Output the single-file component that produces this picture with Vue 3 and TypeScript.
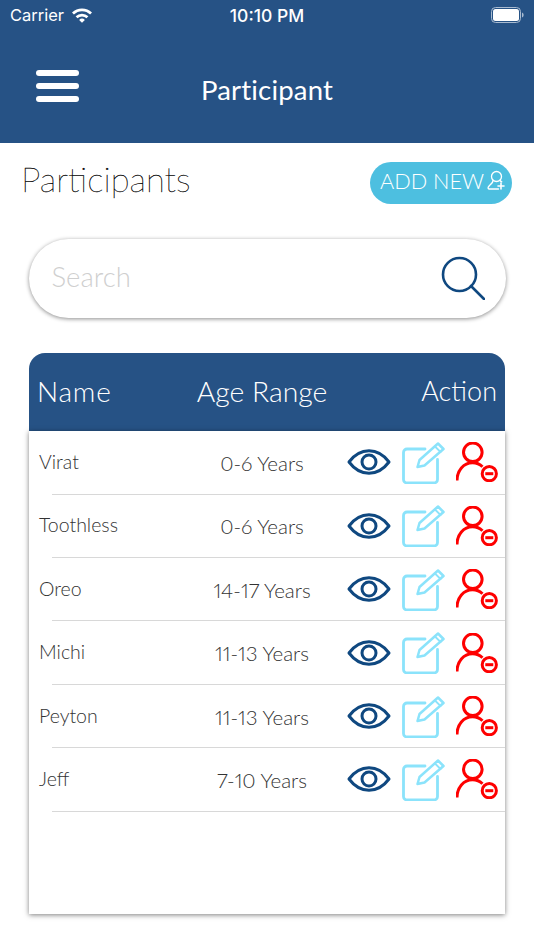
<script setup lang="ts">
interface Participant { name: string; age: string }
const participants: Participant[] = [
  { name: 'Virat', age: '0-6 Years' },
  { name: 'Toothless', age: '0-6 Years' },
  { name: 'Oreo', age: '14-17 Years' },
  { name: 'Michi', age: '11-13 Years' },
  { name: 'Peyton', age: '11-13 Years' },
  { name: 'Jeff', age: '7-10 Years' },
]
</script>

<template>
  <div class="page">
    <header class="top">
      <div class="status">
        <div class="status-left">
          <span>Carrier</span>
          <svg class="wifi" viewBox="0 0 22 16" width="22" height="16">
            <path d="M1 5.600a14.200 14.200 0 0 1 20 0l-1.900 2a11.500 11.500 0 0 0-16.200 0z" fill="#fff" />
            <path d="M4.600 9.300a9.100 9.100 0 0 1 12.800 0l-1.900 2a6.400 6.400 0 0 0-9 0z" fill="#fff" />
            <path d="M8.100 12.900a4.100 4.100 0 0 1 5.800 0L11 15.800z" fill="#fff" />
          </svg>
        </div>
        <div class="status-time">10:10 PM</div>
        <div class="status-right">
          <svg viewBox="0 0 33 16" width="33" height="16">
            <rect x="0.500" y="0.500" width="29" height="15" rx="4" fill="none" stroke="#a9bbd0" />
            <rect x="2" y="2" width="26" height="12" rx="2.500" fill="#fff" />
            <path d="M31 5.500c1.200.4 1.600 1.300 1.600 2.500s-.4 2.100-1.600 2.500z" fill="#a9bbd0" />
          </svg>
        </div>
      </div>
      <nav class="nav">
        <div class="burger"><i></i><i></i><i></i></div>
        <h1 class="nav-title">Participant</h1>
        <div></div>
      </nav>
    </header>

    <section class="heading">
      <h2>Participants</h2>
      <button class="add" type="button">
        <span>ADD NEW</span>
        <svg viewBox="0 0 20 21" width="20" height="21" fill="none" stroke="#fff" stroke-width="1.300" stroke-linecap="round" stroke-linejoin="round">
          <circle cx="10.500" cy="6.500" r="5" />
          <path d="M7 10.500c.2 2-1.700 3.300-3.700 5.200-1.500 1.500-1.700 3-.3 3.300h9.500M14 10.500c.5.700 1 1 1.800 1.300" />
          <path d="M12 16h6M15 13v6" stroke-width="1.600" />
        </svg>
      </button>
    </section>

    <div class="search">
      <span class="placeholder">Search</span>
      <svg viewBox="0 0 44 44" width="44" height="44" fill="none" stroke="#0f4880" stroke-width="2.600" stroke-linecap="round">
        <circle cx="18.500" cy="18.500" r="16.500" />
        <path d="M30 30l13 13" />
      </svg>
    </div>

    <section class="table">
      <div class="thead">
        <span class="th-name">Name</span>
        <span class="th-age">Age Range</span>
        <span class="th-action">Action</span>
      </div>
      <div class="tbody">
        <template v-for="p in participants" :key="p.name">
          <div class="row">
            <span class="name">{{ p.name }}</span>
            <span class="age">{{ p.age }}</span>
            <div class="actions">
              <svg class="eye" viewBox="0 0 44 26" width="44" height="26" fill="none" stroke="#0f4880" stroke-width="3">
                <path d="M2 13C8 5 15 1.800 22 1.800S36 5 42 13c-6 8-13 11.200-20 11.200S8 21 2 13z" stroke-linejoin="round" />
                <circle cx="22" cy="13" r="7" />
              </svg>
              <svg class="edit" viewBox="0 0 43 43" width="43" height="43" fill="none" stroke="#8be3fb" stroke-width="2.800" stroke-linecap="round" stroke-linejoin="round">
                <path d="M23 8H5a3.500 3.500 0 0 0-3.500 3.500v27A3.500 3.500 0 0 0 5 42h27a3.500 3.500 0 0 0 3.500-3.500V18.500" />
                <path d="M15.500 26l2-7L36 2.500 41.500 8 22.500 24.500z" stroke-width="2.500" />
                <path d="M33 5.500l5.500 5.500" stroke-width="1.800" />
              </svg>
              <svg class="remove" viewBox="0 0 43 40" width="43" height="40" fill="none" stroke="#fe0000" stroke-width="3">
                <circle cx="16.800" cy="10.300" r="9.300" />
                <path d="M1 38.500c0-10 6.500-17.700 15.500-17.700 4 0 7 1 10 4" />
                <circle cx="33.300" cy="31.700" r="7.100" />
                <path d="M29.300 31.700h8" />
              </svg>
            </div>
          </div>
          <div class="divider"></div>
        </template>
      </div>
    </section>
  </div>
</template>

<style>
html, body { margin: 0; background: #fff; }
</style>

<style scoped>
.page {
  width: 534px;
  height: 950px;
  overflow: hidden;
  background: #fff;
  font-family: Lato, "Liberation Sans", sans-serif;
  font-weight: 300;
}
.top { background: #265285; height: 142.500px; color: #fff; }
.status {
  height: 30px;
  display: grid;
  grid-template-columns: 1fr auto 1fr;
  align-items: center;
  padding: 0 10px;
  font-family: Inter, Roboto, sans-serif;
  font-size: 16.500px;
}
.status-left { display: flex; align-items: center; gap: 7px; font-weight: 400; }
.status-time { font-weight: 500; font-size: 17.500px; }
.status-right { display: flex; justify-content: flex-end; }
.nav {
  height: 112px;
  display: grid;
  grid-template-columns: 1fr auto 1fr;
  align-items: center;
  padding: 0 36px 10px;
}
.burger { display: flex; flex-direction: column; gap: 7.500px; width: 43px; }
.burger i { display: block; height: 5.500px; border-radius: 3px; background: #fff; }
.nav-title {
  margin: 0;
  padding-top: 6px;
  font-size: 27.500px;
  font-weight: 400;
  letter-spacing: 0.200px;
}
.heading {
  display: flex;
  justify-content: space-between;
  align-items: flex-start;
  padding: 19px 22px 0;
}
.heading h2 {
  margin: -4px 0 0 -1px;
  font-size: 34.700px;
  font-weight: 200;
  line-height: 42px;
  color: #000;
  -webkit-text-stroke: 0.300px #000;
}
.add {
  width: 142px;
  height: 42px;
  border: 0;
  border-radius: 21px;
  background: #4dbfe0;
  color: #fff;
  font: inherit;
  font-size: 21.700px;
  display: flex;
  align-items: center;
  justify-content: flex-start;
  gap: 2px;
  padding: 0 0 0 10px;
}
.add span { padding-bottom: 4px; white-space: nowrap; }
.add svg { margin-bottom: 5px; flex: none; }
.search {
  margin: 35px 28.500px 0;
  height: 79px;
  border-radius: 40px;
  background: #fff;
  box-shadow: 0 1px 4px rgba(0, 0, 0, 0.45);
  display: flex;
  align-items: center;
  justify-content: space-between;
  padding: 0 21px 0 23px;
}
.placeholder { font-size: 27.500px; color: #cfcfcf; padding-bottom: 4px; }
.table { margin: 35px 29px 0; }
.thead {
  box-sizing: border-box;
  height: 78px;
  background: #265285;
  border-radius: 16px 16px 0 0;
  color: #fff;
  display: grid;
  grid-template-columns: 154px 158px 1fr;
  align-items: center;
  padding-bottom: 2px;
}
.th-name { padding-left: 8px; font-size: 28px; letter-spacing: 0.800px; }
.th-age { text-align: center; white-space: nowrap; font-size: 28.300px; }
.th-action { text-align: right; padding-right: 8px; font-size: 27px; }
.tbody {
  box-sizing: border-box;
  height: 483px;
  padding-top: 0.800px;
  background: #fff;
  box-shadow: 0 1px 5px rgba(0, 0, 0, 0.5);
  color: #333;
}
.row {
  height: 62.400px;
  display: grid;
  grid-template-columns: 154px 158px 1fr;
  align-items: center;
}
.divider { height: 1px; margin-left: 23px; background: #d8d8d8; }
.name { padding-left: 10px; font-size: 19.500px; padding-bottom: 2px; }
.age {
  text-align: center;
  font-size: 20.500px;
  padding-top: 1px;
  font-variant-numeric: proportional-nums;
}
.actions { display: flex; align-items: center; }
.eye { margin-left: 6px; }
.edit { margin-left: 11px; }
.remove { margin-left: 11px; }
</style>
